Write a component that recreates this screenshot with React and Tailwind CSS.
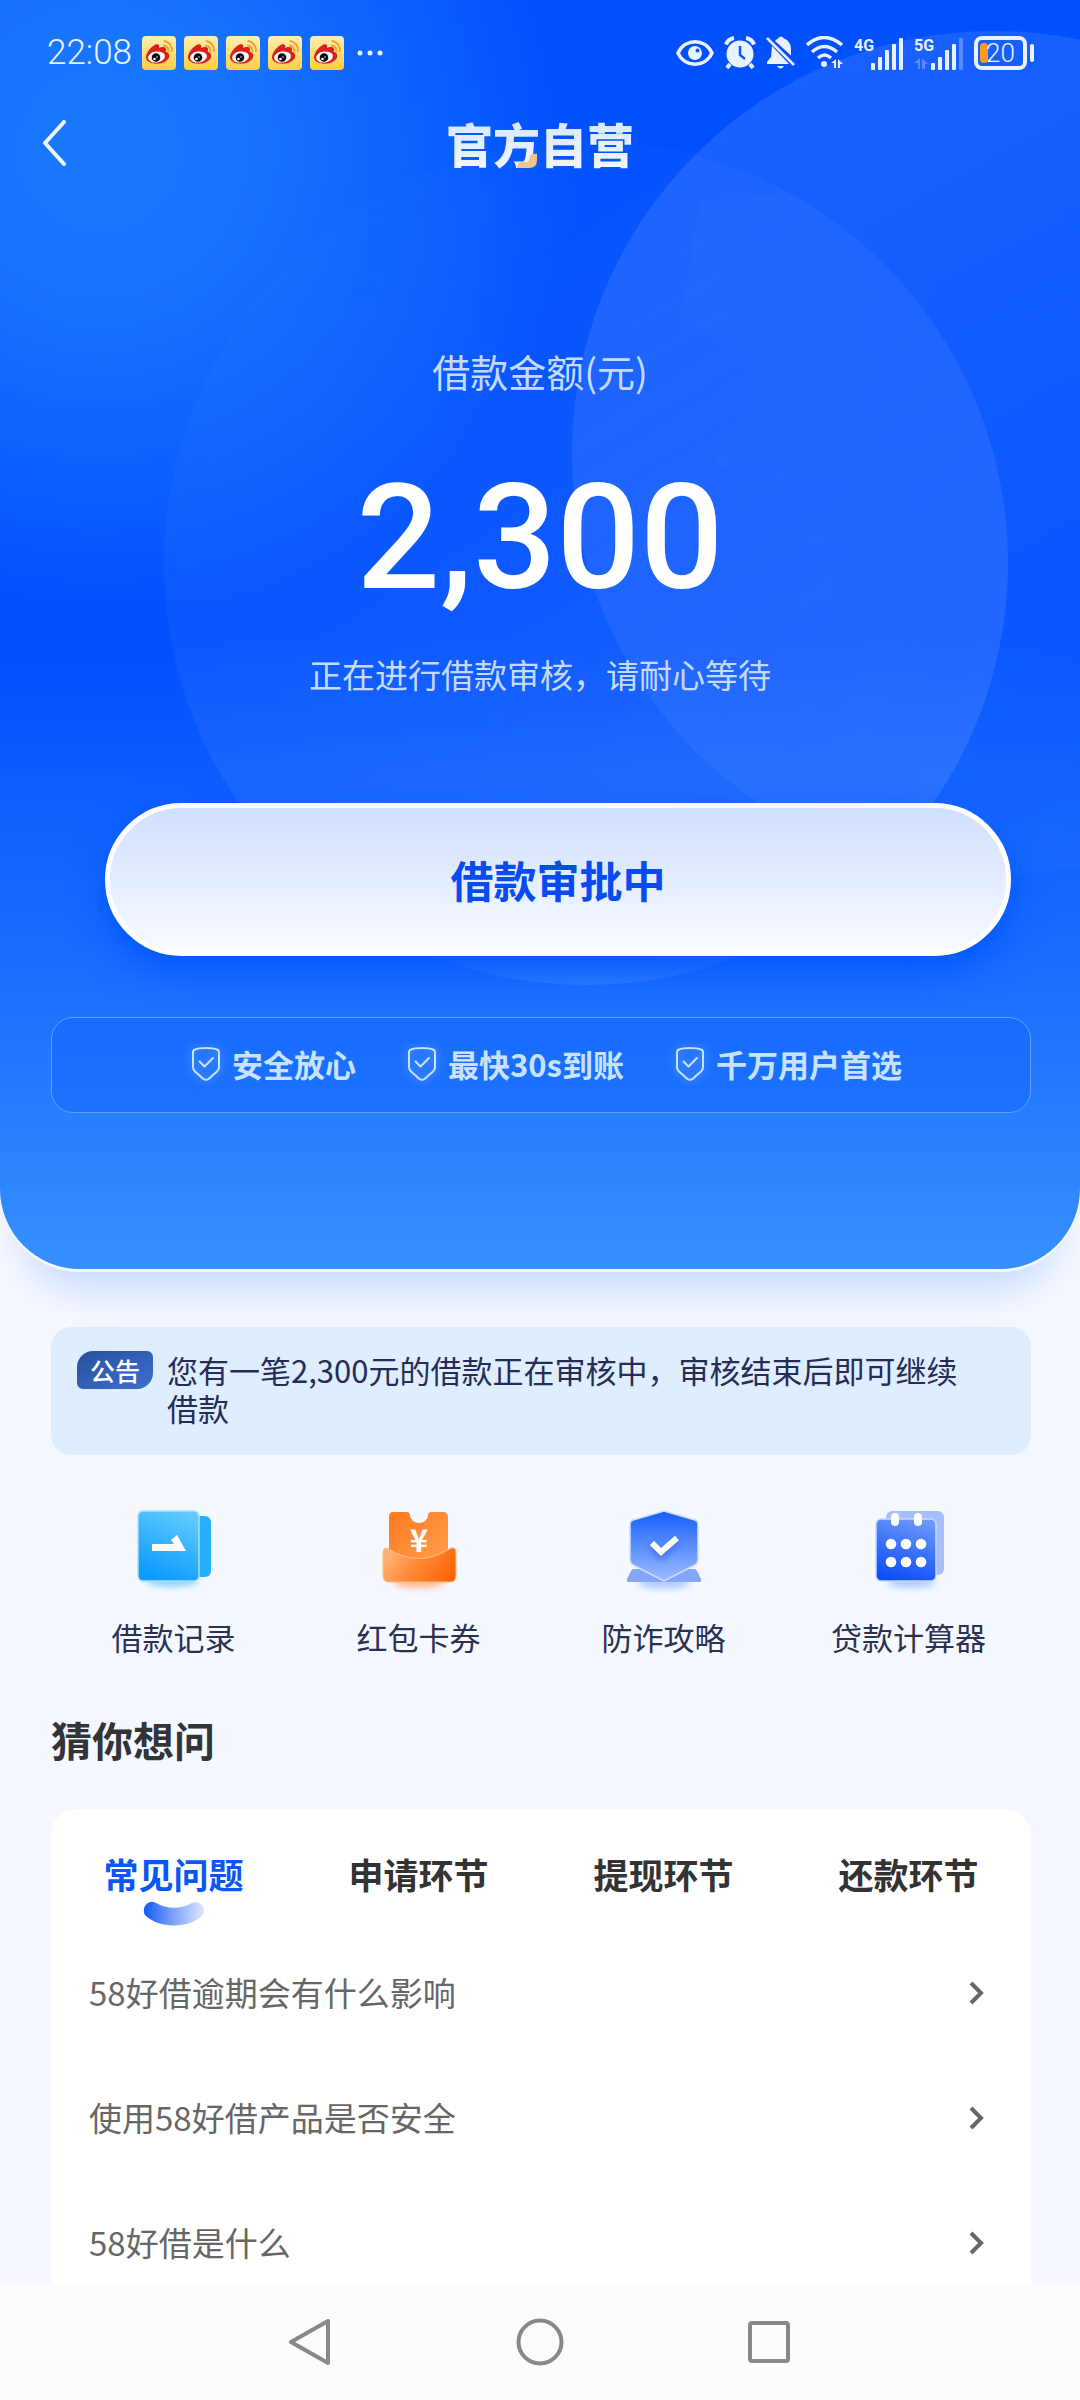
import { useState } from "react";

const features = ["安全放心", "最快30s到账", "千万用户首选"];

const tabs = ["常见问题", "申请环节", "提现环节", "还款环节"];

const questions = [
  "58好借逾期会有什么影响",
  "使用58好借产品是否安全",
  "58好借是什么",
];

const WeiboIcon = () => (
  <svg width="34" height="34" viewBox="0 0 34 34" aria-hidden="true">
    <defs>
      <linearGradient id="weiboBg" x1="0" y1="0" x2="0" y2="1">
        <stop offset="0" stopColor="#fdeeb5" />
        <stop offset="1" stopColor="#ffcf3a" />
      </linearGradient>
    </defs>
    <rect width="34" height="34" rx="4" fill="url(#weiboBg)" />
    <path
      d="M22 9.500a6 6 0 0 1 4.500 6M22.500 5a9.500 9.500 0 0 1 7.500 10"
      fill="none"
      stroke="#eda632"
      strokeWidth="2"
      strokeLinecap="round"
    />
    <path
      d="M4 21c0-4 5-10.500 9.500-12.500 3-1 4.500.5 3.500 3.500 3-1.300 6.500-1.500 7 1 .2 1-.3 2-.3 2.700 2 .6 3.500 2 3.500 4 0 4.500-6 8-12.500 8S4 25 4 21z"
      fill="#dc1f1c"
    />
    <ellipse cx="14.500" cy="21" rx="8.500" ry="5.500" transform="rotate(-8 14.500 21)" fill="#fff" />
    <circle cx="14" cy="21.500" r="4.300" fill="#0b0b12" />
    <circle cx="12.500" cy="23" r="1.300" fill="#fff" />
    <circle cx="15" cy="21" r="0.700" fill="#fff" />
  </svg>
);

const Signal = ({ label, weak }) => (
  <svg width="50" height="38" viewBox="0 -4 50 38" fill="#e9f1ff" role="img" aria-label={label}>
    <text x="0" y="13" fontSize="16" fontWeight="700" fontFamily="Roboto, sans-serif">
      {label}
    </text>
    <rect x="17" y="25" width="4" height="7" rx="1" />
    <rect x="24" y="19" width="4" height="13" rx="1" />
    <rect x="31" y="12" width="4" height="20" rx="1" />
    <rect x="38" y="6" width="4" height="26" rx="1" />
    <rect x="45" y="0" width="4" height="32" rx="1" opacity={weak ? 0.3 : 1} />
    {weak && <path d="M6 20v11H4v-6H0zM8 20l6 6h-3v5H8z" opacity="0.3" />}
  </svg>
);

const StatusBar = () => (
  <div className="flex h-[106px] items-center justify-between pl-[47px] pr-[46px] text-[#eaf2ff]">
    <div className="flex items-center gap-2">
      <span className="mr-0.5 font-[Roboto,sans-serif] text-[35px] leading-10 font-light">
        22:08
      </span>
      {[0, 1, 2, 3, 4].map((item) => (
        <WeiboIcon key={item} />
      ))}
      <svg width="40" height="8" viewBox="0 0 40 8" fill="currentColor" aria-hidden="true">
        <circle cx="8" cy="4" r="2.500" />
        <circle cx="18" cy="4" r="2.500" />
        <circle cx="28" cy="4" r="2.500" />
      </svg>
    </div>

    <div className="flex items-center gap-2.5">
      <svg width="38" height="34" viewBox="0 0 38 34" aria-hidden="true">
        <path
          d="M2 17C9 2 29 2 36 17 29 32 9 32 2 17z"
          fill="none"
          stroke="currentColor"
          strokeWidth="3.500"
        />
        <circle cx="19" cy="17" r="7" fill="currentColor" />
        <circle cx="21.500" cy="14.500" r="2" fill="#0a57ff" />
      </svg>
      <svg width="32" height="34" viewBox="0 0 32 34" fill="currentColor" aria-hidden="true">
        <circle cx="16" cy="18" r="13.500" />
        <path
          d="M2 8.500Q4 3 10 2M30 8.500Q28 3 22 2M6 28l-3 4M26 28l3 4"
          fill="none"
          stroke="currentColor"
          strokeWidth="4"
        />
        <path d="M16 10v9l5 4" fill="none" stroke="#0a57ff" strokeWidth="2.500" />
      </svg>
      <svg width="30" height="34" viewBox="0 0 30 34" fill="currentColor" aria-hidden="true">
        <path d="M12 2.500Q15-1.500 18 2.500c5 2 7 6 7 11v6L9 5c1-1.200 2-2 3-2.500zM6 10l17 18H1v-2l4-5zM11 30h7q-3.500 5-7 0z" />
        <path d="M1 2l27 27" stroke="currentColor" strokeWidth="2.500" />
      </svg>
      <svg width="38" height="34" viewBox="0 0 38 34" aria-hidden="true">
        <path
          d="M1 9Q18-6 36 9M6 16Q18 5 31 16M12 22q6.500-6 13 0"
          fill="none"
          stroke="currentColor"
          strokeWidth="3.500"
        />
        <circle cx="18" cy="28" r="3" fill="currentColor" />
        <path d="M30 23v9h-2v-5h-3zM32 23l5 5h-3v4h-2z" fill="currentColor" />
      </svg>
      <Signal label="4G" />
      <Signal label="5G" weak />
      <div className="flex items-center gap-[3px]">
        <div className="relative flex h-[34px] w-[53px] items-center justify-center rounded-lg border-4 border-current">
          <span className="absolute top-[3px] bottom-[3px] left-0.5 w-2 rounded-sm bg-[#ff9a1f]" />
          <span className="relative font-[Roboto,sans-serif] text-[26px] leading-none font-light">
            20
          </span>
        </div>
        <span className="h-[18px] w-1 rounded-sm bg-current" />
      </div>
    </div>
  </div>
);

const HeroBackdrop = () => (
  <svg
    className="absolute inset-0 h-full w-full"
    viewBox="0 0 1080 1270"
    preserveAspectRatio="xMidYMin slice"
    aria-hidden="true"
  >
    <defs>
      <linearGradient id="heroBase" x1="0" y1="0" x2="0" y2="1">
        <stop offset="0" stopColor="#0050ff" />
        <stop offset="0.500" stopColor="#0050ff" />
        <stop offset="0.780" stopColor="#1c70ff" />
        <stop offset="1" stopColor="#3790ff" />
      </linearGradient>
      <radialGradient id="heroGlow" gradientUnits="userSpaceOnUse" cx="100" cy="150" r="480">
        <stop offset="0" stopColor="#1a78ff" />
        <stop offset="0.300" stopColor="#1a78ff" stopOpacity="0.900" />
        <stop offset="1" stopColor="#1a78ff" stopOpacity="0" />
      </radialGradient>
      <linearGradient id="bigCircle" x1="0.200" y1="0.100" x2="0.700" y2="0.900">
        <stop offset="0" stopColor="#fff" stopOpacity="0.010" />
        <stop offset="1" stopColor="#fff" stopOpacity="0.100" />
      </linearGradient>
      <linearGradient id="sideCircle" x1="0.100" y1="0.100" x2="0.600" y2="1">
        <stop offset="0" stopColor="#fff" stopOpacity="0.100" />
        <stop offset="1" stopColor="#fff" stopOpacity="0.020" />
      </linearGradient>
      <linearGradient id="wing" x1="0" y1="0" x2="1" y2="0">
        <stop offset="0" stopColor="#fff" stopOpacity="0.014" />
        <stop offset="0.800" stopColor="#fff" stopOpacity="0" />
      </linearGradient>
    </defs>
    <rect width="1080" height="1270" fill="url(#heroBase)" />
    <rect width="1080" height="1270" fill="url(#heroGlow)" />
    <circle cx="586" cy="563" r="422" fill="url(#bigCircle)" />
    <circle cx="994" cy="453" r="422" fill="url(#sideCircle)" />
    <g fill="url(#wing)">
      <path d="M700 200l-20 120 60 30 10 50-40 70 190-20 90-60V180z" />
      <path d="M720 490l270-30-210 90 100-15-90 70 90 0-50 140 170 60V400z" />
    </g>
  </svg>
);

const ShieldIcon = () => (
  <svg
    className="drop-shadow-[0_0_5px_#6fb0ff]"
    width="28"
    height="34"
    viewBox="0 0 28 34"
    fill="none"
    stroke="#c8e2ff"
    strokeWidth="2"
    strokeLinejoin="round"
    strokeLinecap="round"
    aria-hidden="true"
  >
    <path d="M14 1C9 1 5 1.500 3 2.500 1.500 3 1 4 1 5.500V20c0 2 .5 3.200 2 4.500l8.500 7.500c2 1.300 3 1.300 5 0l8.500-7.500c1.500-1.300 2-2.500 2-4.500V5.500C27 4 26.500 3 25 2.500 23 1.500 19 1 14 1z" />
    <path d="M7.500 14.500l5 5 8.500-8.500" />
  </svg>
);

const RecordIcon = () => (
  <svg width="84" height="90" viewBox="0 0 84 90" aria-hidden="true">
    <defs>
      <linearGradient id="recordFront" x1="0.800" y1="0" x2="0.400" y2="1">
        <stop offset="0" stopColor="#66ccff" />
        <stop offset="0.500" stopColor="#35b4fe" />
        <stop offset="1" stopColor="#0d9bff" />
      </linearGradient>
    </defs>
    <ellipse cx="40" cy="76" rx="26" ry="6" fill="#8fd3ff" className="blur-[3px]" />
    <rect x="50" y="11" width="29" height="61" rx="6" fill="#27aeff" />
    <rect x="6" y="6" width="61" height="70" rx="5" fill="url(#recordFront)" stroke="#a6e0ff" strokeWidth="1.500" />
    <path d="M20 39h22l-3-4 6-5 9 16H20z" fill="#fff" />
  </svg>
);

const CouponIcon = () => (
  <svg width="84" height="90" viewBox="0 0 84 90" aria-hidden="true">
    <defs>
      <linearGradient id="couponTop" x1="0" y1="0" x2="1" y2="1">
        <stop offset="0" stopColor="#ff7a1f" />
        <stop offset="1" stopColor="#ffa050" />
      </linearGradient>
      <linearGradient id="couponPocket" x1="0" y1="0.500" x2="1" y2="0.800">
        <stop offset="0" stopColor="#ffb070" />
        <stop offset="0.400" stopColor="#ff8a38" />
        <stop offset="1" stopColor="#ff6205" />
      </linearGradient>
    </defs>
    <ellipse cx="42" cy="77" rx="25" ry="6" fill="#ffb98a" className="blur-[3px]" />
    <path
      d="M16 7h13q4 0 4 3a9 8 0 0 0 18 0q0-3 4-3h11q5 0 5 5v48H12V12q0-5 4-5z"
      fill="url(#couponTop)"
    />
    <text
      x="42"
      y="47"
      textAnchor="middle"
      fontSize="31"
      fontWeight="700"
      fontFamily="Noto Sans CJK SC, sans-serif"
      fill="#fff"
    >
      ¥
    </text>
    <path
      d="M10 43Q42 64 74 43q5-1 5 4v24q0 6-6 6H12q-6 0-6-6V47q0-4 4-4z"
      fill="url(#couponPocket)"
      stroke="#ffbb85"
      strokeWidth="1"
    />
  </svg>
);

const GuardIcon = () => (
  <svg width="84" height="90" viewBox="0 0 84 90" aria-hidden="true">
    <defs>
      <linearGradient id="guardShield" x1="0" y1="0" x2="0" y2="1">
        <stop offset="0" stopColor="#1560fb" />
        <stop offset="1" stopColor="#9dbcff" />
      </linearGradient>
    </defs>
    <ellipse cx="42" cy="78" rx="26" ry="6" fill="#b3caff" className="blur-[3px]" />
    <path
      d="M12 64h60q2 0 3 2l4 8q1 3-2 3H7q-3 0-2-3l4-8q1-2 3-2z"
      fill="#84a7fb"
    />
    <path
      d="M42 6l31 9q3 1 3 4v36q0 3-3 5L42 76 11 60q-3-2-3-5V19q0-3 3-4z"
      fill="url(#guardShield)"
      stroke="#cfdfff"
      strokeWidth="1.500"
    />
    <path d="M30 38l9 9 16-14" fill="none" stroke="#3f6fe8" strokeWidth="6" className="translate-y-1 blur-[3px]" />
    <path d="M30 38l9 9 16-14" fill="none" stroke="#fff" strokeWidth="6" />
  </svg>
);

const CalculatorIcon = () => (
  <svg width="84" height="90" viewBox="0 0 84 90" aria-hidden="true">
    <defs>
      <linearGradient id="calcFront" x1="0.700" y1="0" x2="0.400" y2="1">
        <stop offset="0" stopColor="#6f98fb" />
        <stop offset="0.500" stopColor="#3a72fa" />
        <stop offset="1" stopColor="#0f4ff8" />
      </linearGradient>
    </defs>
    <ellipse cx="44" cy="77" rx="24" ry="6" fill="#b3caff" className="blur-[3px]" />
    <rect x="19" y="6" width="58" height="64" rx="6" fill="#a5bef9" />
    <rect x="9" y="14" width="60" height="62" rx="5" fill="url(#calcFront)" stroke="#c5d7ff" strokeWidth="1.500" />
    <rect x="24" y="8" width="8" height="13" rx="4" fill="#fff" />
    <rect x="47" y="8" width="8" height="13" rx="4" fill="#fff" />
    <g fill="#fff">
      <circle cx="24" cy="39" r="5.300" />
      <circle cx="39" cy="39" r="5.300" />
      <circle cx="54" cy="39" r="5.300" />
      <circle cx="24" cy="57" r="5.300" />
      <circle cx="39" cy="57" r="5.300" />
      <circle cx="54" cy="57" r="5.300" />
    </g>
  </svg>
);

const shortcuts = [
  { title: "借款记录", icon: <RecordIcon /> },
  { title: "红包卡券", icon: <CouponIcon /> },
  { title: "防诈攻略", icon: <GuardIcon /> },
  { title: "贷款计算器", icon: <CalculatorIcon /> },
];

const TabMark = () => (
  <svg width="62" height="25" viewBox="0 0 62 25" aria-hidden="true">
    <defs>
      <linearGradient id="tabMark" x1="0" y1="0" x2="1" y2="0">
        <stop offset="0" stopColor="#1259fb" />
        <stop offset="0.500" stopColor="#7fa3fb" />
        <stop offset="1" stopColor="#e0e9ff" />
      </linearGradient>
    </defs>
    <path
      d="M12 1.500Q31 12 50 1.500C57-1 64 7 60 14 46 28 16 28 2 14-2 7 5-2 12 1.500z"
      fill="url(#tabMark)"
    />
  </svg>
);

const Hero = () => (
  <section className="relative rounded-b-[80px] pb-[156px] shadow-[0_3px_0_#f4faff,0_44px_44px_-30px_rgba(60,130,255,0.32)]">
    <div className="absolute inset-0 overflow-hidden rounded-b-[80px]">
      <HeroBackdrop />
    </div>

    <div className="relative">
      <StatusBar />

      <header className="grid h-[78px] grid-cols-[120px_1fr_120px] items-center pb-1">
        <button type="button" aria-label="返回" className="flex h-full items-center pl-[42px]">
          <svg width="25" height="46" viewBox="0 0 25 46" aria-hidden="true">
            <path
              d="M22 2L3 23l19 21"
              fill="none"
              stroke="#f1f6ff"
              strokeWidth="4"
              strokeLinecap="round"
              strokeLinejoin="round"
            />
          </svg>
        </button>
        <h1 className="relative mx-auto bg-gradient-to-b from-[#d5e4ff] to-[#f4f8ff] bg-clip-text text-[47px] leading-[60px] font-black text-transparent">
          官方自营
          <svg
            className="absolute bottom-1 left-[70px]"
            width="22"
            height="16"
            viewBox="0 0 22 16"
            aria-hidden="true"
          >
            <path d="M14 3Q15 0 21 1v6q0 8-8 8H1q0-5 5-6h4q4 0 4-6z" fill="#f3c583" />
          </svg>
        </h1>
      </header>

      <div className="mt-[160px] text-center text-[#c6daff]">
        <p className="text-[38px] leading-[54px]">借款金额(元)</p>
        <p className="mt-[60px] font-[Roboto,sans-serif] text-[147px] leading-[160px] font-medium text-white">
          2,300
        </p>
        <p className="mt-8 text-[33px] leading-[48px]">正在进行借款审核，请耐心等待</p>
      </div>

      <div className="mt-[105px] pr-[69px] pl-[105px]">
        <button
          type="button"
          className="h-[153px] w-full rounded-full border-[5px] border-white bg-gradient-to-b from-[#cfdfff] to-[#f9fbff] text-[43px] font-bold text-[#084bf0] shadow-[0_14px_36px_#0055ff]"
        >
          借款审批中
        </button>
      </div>

      <ul className="mr-[49px] ml-[51px] mt-[61px] flex h-24 items-center justify-center gap-[52px] rounded-[22px] border border-[#5b9fff] bg-[#0f62ff]/40 pb-0.5 pl-3">
        {features.map((feature) => (
          <li key={feature} className="flex items-center gap-3">
            <ShieldIcon />
            <span className="text-[31px] leading-10 font-bold text-[#c8e2ff]">{feature}</span>
          </li>
        ))}
      </ul>
    </div>
  </section>
);

const Notice = () => (
  <section className="mr-[49px] ml-[51px] mt-[58px] flex min-h-32 items-start gap-3.5 rounded-[20px] bg-[#deeefe] pt-6 pr-14 pl-[26px]">
    <span className="flex h-[38px] w-[76px] shrink-0 items-center justify-center rounded-tl-2xl rounded-tr-md rounded-br-2xl rounded-bl-md bg-gradient-to-br from-[#274f9d] to-[#3f70d2] text-[25px] leading-none font-medium text-white">
      公告
    </span>
    <p className="flex-1 text-[31px] leading-[38px] text-[#262c55]">
      您有一笔2,300元的借款正在审核中，审核结束后即可继续借款
    </p>
  </section>
);

const Questions = () => {
  const [activeTab, setActiveTab] = useState(tabs[0]);

  return (
    <section className="mr-[49px] ml-[51px] mt-[50px]">
      <h2 className="text-[41px] leading-[60px] font-bold text-[#323438]">猜你想问</h2>

      <div className="mt-10 rounded-t-[26px] bg-white pt-10">
        <div role="tablist" className="grid grid-cols-4">
          {tabs.map((tab) => (
            <button
              key={tab}
              type="button"
              role="tab"
              aria-selected={tab === activeTab}
              onClick={() => setActiveTab(tab)}
              className={`flex h-20 flex-col items-center gap-0.5 text-[35px] leading-[50px] font-bold ${
                tab === activeTab ? "text-[#0b57f5]" : "text-[#333333]"
              }`}
            >
              {tab}
              {tab === activeTab && <TabMark />}
            </button>
          ))}
        </div>

        <ul>
          {questions.map((question) => (
            <li key={question}>
              <button
                type="button"
                className="flex h-[125px] w-full items-center justify-between pr-[47px] pl-[38px] text-[33px] leading-[48px] text-[#666666]"
              >
                {question}
                <svg width="16" height="28" viewBox="0 0 16 28" aria-hidden="true">
                  <path d="M3 5l10 10L3 25" fill="none" stroke="#666" strokeWidth="4" />
                </svg>
              </button>
            </li>
          ))}
        </ul>
      </div>
    </section>
  );
};

const NavBar = () => (
  <nav className="flex h-[116px] shrink-0 items-start justify-center gap-[181px] bg-[#fcfcfc] pt-[34px]">
    <button type="button" aria-label="后退">
      <svg width="48" height="48" viewBox="0 0 48 48" aria-hidden="true">
        <path
          d="M41 3v42L4 24z"
          fill="none"
          stroke="#888"
          strokeWidth="4"
          strokeLinejoin="round"
        />
      </svg>
    </button>
    <button type="button" aria-label="主页">
      <svg width="48" height="48" viewBox="0 0 48 48" aria-hidden="true">
        <circle cx="24" cy="24" r="21.500" fill="none" stroke="#888" strokeWidth="4" />
      </svg>
    </button>
    <button type="button" aria-label="最近任务">
      <svg width="48" height="48" viewBox="0 0 48 48" aria-hidden="true">
        <rect x="5" y="5" width="38" height="38" rx="2" fill="none" stroke="#888" strokeWidth="4" />
      </svg>
    </button>
  </nav>
);

const App = () => {
  return (
    <div className="flex h-screen flex-col bg-[#f5f8ff] font-['Noto_Sans_CJK_SC',sans-serif]">
      <main className="min-h-0 flex-1 overflow-y-auto [scrollbar-width:none]">
        <Hero />
        <Notice />

        {/* Shortcuts */}
        <div className="mr-[49px] ml-[51px] mt-[50px] grid grid-cols-4">
          {shortcuts.map((item) => (
            <a key={item.title} href="#" className="flex flex-col items-center gap-5">
              {item.icon}
              <span className="text-[31px] leading-[44px] text-[#2b3150]">{item.title}</span>
            </a>
          ))}
        </div>

        <Questions />
      </main>
      <NavBar />
    </div>
  );
};

export default App;
